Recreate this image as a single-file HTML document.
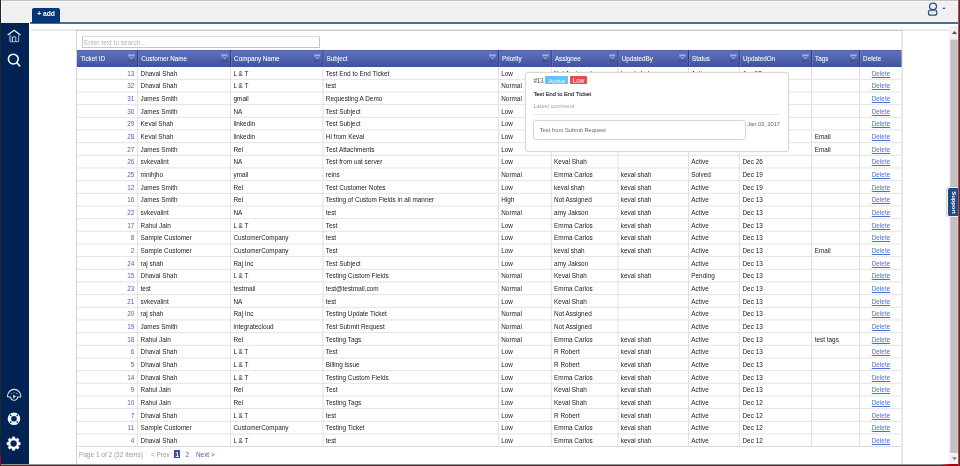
<!DOCTYPE html><html><head><meta charset="utf-8"><title>Tickets</title><style>
*{box-sizing:border-box;margin:0;padding:0}
html,body{width:960px;height:466px;overflow:hidden;background:#fff}
#w{position:absolute;left:-12px;top:-12px;width:984px;height:490px;filter:blur(0.35px);background:#fff}
#in{position:absolute;left:12px;top:12px;width:960px;height:466px}
body{position:relative;font-family:"Liberation Sans",sans-serif;font-size:6.4px;color:#222}
.abs{position:absolute}
#topbar{left:-12px;top:-12px;width:984px;height:34.6px;background:linear-gradient(#c3c3c3,#c3c3c3 13px,#f5f5f5 13px,#f5f5f5 14px,#f0f0f0 14px)}
#blueline{left:29.5px;top:22.25px;width:929.5px;height:1.4px;background:#4b6c9a}
#sidebar{left:0.8px;top:22.5px;width:28.7px;height:441.8px;background:#002354}
#leftedge{left:-12px;top:-12px;width:13px;height:490px;background:#262626}
#tab{left:32px;top:7.8px;width:28.1px;height:14.9px;background:#053775;border-radius:2px 2px 0 0;color:#fff;font-weight:bold;font-size:6.7px;line-height:11.6px;text-align:center}
#sep{left:31px;top:29.4px;width:918px;height:1.6px;background:#e8e8e8}
#grid{left:76px;top:30px;width:826px;height:434px;background:#fff}
#search{left:82.1px;top:36.3px;width:237.7px;height:11.5px;border:1px solid #c6c6c6;border-top-color:#dcdcdc;background:#fff;color:#b2b2b2;font-size:6.5px;line-height:11.7px;padding-left:0.9px;white-space:nowrap}
#header{left:76px;top:50px;width:826px;height:16.65px;background:linear-gradient(#6172ba,#5466b0 40%,#3e519c);border-top:1px solid #4d60ab}
.h{position:absolute;top:50px;height:16.6px;color:#fff;font-size:6.3px;line-height:17.1px;white-space:nowrap;-webkit-text-stroke:0.05px #fff}
.fb{position:absolute;top:54px;width:6.7px;height:7.8px;background:linear-gradient(#8a9ad0,#5568b0 50%,#34478f)}
.r{position:absolute;left:0;width:960px;height:12.665px}
.c{position:absolute;top:0;height:12.665px;line-height:14.5px;white-space:nowrap}
.c.id{text-align:right;color:#4f63b8}
.c.del{text-align:center;color:#4a6fd8;text-decoration:underline;text-decoration-thickness:0.6px}
#pager{left:77px;top:447.2px;width:824px;height:17px;background:#fff;color:#9a9a9a;line-height:15px;white-space:nowrap}
#pager span{position:absolute;top:0}
#popup{left:525.3px;top:72.3px;width:263.3px;height:79.7px;background:#fff;border:1px solid #dbd6cf;border-radius:3px;box-shadow:0 0 1.5px rgba(0,0,0,.10)}
#scroll{left:950px;top:26px;width:9px;height:438px;background:#f0f0f0}
#thumb{left:950.5px;top:39.5px;width:8px;height:413.5px;background:#c1c1c1}
#redr{left:958.75px;top:-12px;width:14px;height:490px;background:#a9040f}
#darkr{left:957.8px;top:-12px;width:1px;height:476.5px;background:#66706f}
#redb{left:-12px;top:464.8px;width:984px;height:14px;background:#a9040f}
#grayb{left:-12px;top:463.7px;width:984px;height:1.2px;background:linear-gradient(to right,#8c9494 0,#8c9494 952px,#a9040f 962px)}
#support{left:947.2px;top:186.9px;width:11.4px;height:30.2px;background:#1f4a83;border:1px solid #eef2f8;border-right:none;border-radius:2.5px 0 0 2.5px;box-shadow:-0.5px 0 1px rgba(0,0,0,.18)}
</style></head><body><div id="w"><div id="in">
<div id="topbar" class="abs"></div>
<div class="abs" style="left:1px;top:1px;width:1px;height:21.4px;background:#fbfbfb"></div>
<div id="sidebar" class="abs"></div>
<div id="blueline" class="abs"></div>
<div id="tab" class="abs">+ add</div>
<svg class="abs" style="left:922px;top:0px" width="30" height="22" viewBox="922 0 30 22"><g fill="none" stroke="#2f4f7c" stroke-width="1.3"><ellipse cx="933" cy="6.35" rx="3.5" ry="3.25"/><path d="M928.5 13.2 V12 Q928.5 10.3 930.4 10.2 H935.4 Q936.8 10.3 936.8 12 V13.2 Q936.8 15.2 934.6 15.2 H930.7 Q928.5 15.2 928.5 13.2Z"/><path d="M929 11.8 H936.3" stroke="#b9c4d4" stroke-width=".6"/></g><rect x="942.8" y="7.7" width="2.3" height="1.3" fill="#33537f"/></svg>
<svg class="abs" style="left:0px;top:22px" width="30" height="442" viewBox="0 22 30 442">
<g fill="none" stroke-linejoin="miter">
<path d="M7.7 35 L14.1 30.2 L20.5 35" stroke="#f2f4f8" stroke-width="1.15"/>
<path d="M9.9 34.4 V41.7 H18.7 V34.4" stroke="#aab6cb" stroke-width="1"/>
<path d="M10.9 35.4 V41.3" stroke="#6f82a6" stroke-width=".9"/>
<path d="M12.5 41.7 V36.9 H15.8 V41.7" stroke="#c4cddc" stroke-width="1"/>
</g>
<g fill="none" stroke="#fff" stroke-width="1.55" stroke-linecap="round">
<circle cx="13.3" cy="59.1" r="4.9"/>
<path d="M16.9 62.7 L19.8 66"/>
</g>
<g fill="none" stroke="#e4e8f0" stroke-width="1.1" stroke-linejoin="round">
<path d="M7.5 396.3 A6.65 6.9 0 0 1 20.8 396.3 Q20.8 397 20 397 H17.6 Q17.2 400.3 14.1 400.3 Q11 400.3 10.6 397 H8.3 Q7.5 397 7.5 396.3Z"/>
</g>
<g fill="#cfd6e4"><circle cx="11.3" cy="393.6" r="0.6"/><circle cx="14" cy="392.6" r="0.6"/><circle cx="16.8" cy="393.6" r="0.6"/></g>
<path d="M13.2 395.2 L15.6 396.3 L14.4 396.9 L13.9 398.3Z" fill="#f0f2f6" stroke="#f0f2f6" stroke-width=".5" stroke-linejoin="round"/>
<g fill="none">
<circle cx="13.96" cy="418.75" r="4.55" stroke="#f4f6fa" stroke-width="3.5"/>
<path d="M16.58 421.37 L17.99 422.78 M11.34 421.37 L9.93 422.78 M11.34 416.13 L9.93 414.72 M16.58 416.13 L17.99 414.72" stroke="#0a2858" stroke-width="1.15"/>
</g>
<path d="M12.03 438.54 L12.50 436.79 L14.70 436.79 L15.17 438.54 L16.07 438.91 L17.64 438.01 L19.19 439.56 L18.29 441.13 L18.66 442.03 L20.41 442.50 L20.41 444.70 L18.66 445.17 L18.29 446.07 L19.19 447.64 L17.64 449.19 L16.07 448.29 L15.17 448.66 L14.70 450.41 L12.50 450.41 L12.03 448.66 L11.13 448.29 L9.56 449.19 L8.01 447.64 L8.91 446.07 L8.54 445.17 L6.79 444.70 L6.79 442.50 L8.54 442.03 L8.91 441.13 L8.01 439.56 L9.56 438.01 L11.13 438.91Z M10.30 443.60 a3.30 3.30 0 1 0 6.60 0 a3.30 3.30 0 1 0 -6.60 0Z" fill="#fff" fill-rule="evenodd" stroke="#fff" stroke-width=".25" stroke-linejoin="round"/>
</svg>
<div id="sep" class="abs"></div>
<div id="grid" class="abs"></div>
<div id="search" class="abs">Enter text to search...</div>
<div id="header" class="abs"></div>
<div class="h" style="left:80.40px;width:56.20px">Ticket ID</div>
<div class="fb" style="left:128.15px"><svg width="7" height="8" viewBox="0 0 7 8" style="display:block"><path d="M1 1.5 H5.8 L3.95 3.6 V5 L2.85 4.4 V3.6Z" fill="#4b5ea8" stroke="#d3daf3" stroke-width=".65" stroke-linejoin="round" opacity=".8"/></svg></div>
<div class="h" style="left:141.20px;width:88.30px">Customer Name</div>
<div class="fb" style="left:221.05px"><svg width="7" height="8" viewBox="0 0 7 8" style="display:block"><path d="M1 1.5 H5.8 L3.95 3.6 V5 L2.85 4.4 V3.6Z" fill="#4b5ea8" stroke="#d3daf3" stroke-width=".65" stroke-linejoin="round" opacity=".8"/></svg></div>
<div class="h" style="left:234.10px;width:87.90px">Company Name</div>
<div class="fb" style="left:313.55px"><svg width="7" height="8" viewBox="0 0 7 8" style="display:block"><path d="M1 1.5 H5.8 L3.95 3.6 V5 L2.85 4.4 V3.6Z" fill="#4b5ea8" stroke="#d3daf3" stroke-width=".65" stroke-linejoin="round" opacity=".8"/></svg></div>
<div class="h" style="left:326.60px;width:170.84px">Subject</div>
<div class="fb" style="left:488.99px"><svg width="7" height="8" viewBox="0 0 7 8" style="display:block"><path d="M1 1.5 H5.8 L3.95 3.6 V5 L2.85 4.4 V3.6Z" fill="#4b5ea8" stroke="#d3daf3" stroke-width=".65" stroke-linejoin="round" opacity=".8"/></svg></div>
<div class="h" style="left:502.04px;width:48.26px">Priority</div>
<div class="fb" style="left:541.85px"><svg width="7" height="8" viewBox="0 0 7 8" style="display:block"><path d="M1 1.5 H5.8 L3.95 3.6 V5 L2.85 4.4 V3.6Z" fill="#4b5ea8" stroke="#d3daf3" stroke-width=".65" stroke-linejoin="round" opacity=".8"/></svg></div>
<div class="h" style="left:554.90px;width:62.16px">Assignee</div>
<div class="fb" style="left:608.61px"><svg width="7" height="8" viewBox="0 0 7 8" style="display:block"><path d="M1 1.5 H5.8 L3.95 3.6 V5 L2.85 4.4 V3.6Z" fill="#4b5ea8" stroke="#d3daf3" stroke-width=".65" stroke-linejoin="round" opacity=".8"/></svg></div>
<div class="h" style="left:621.66px;width:65.84px">UpdatedBy</div>
<div class="fb" style="left:679.05px"><svg width="7" height="8" viewBox="0 0 7 8" style="display:block"><path d="M1 1.5 H5.8 L3.95 3.6 V5 L2.85 4.4 V3.6Z" fill="#4b5ea8" stroke="#d3daf3" stroke-width=".65" stroke-linejoin="round" opacity=".8"/></svg></div>
<div class="h" style="left:692.10px;width:46.20px">Status</div>
<div class="fb" style="left:729.85px"><svg width="7" height="8" viewBox="0 0 7 8" style="display:block"><path d="M1 1.5 H5.8 L3.95 3.6 V5 L2.85 4.4 V3.6Z" fill="#4b5ea8" stroke="#d3daf3" stroke-width=".65" stroke-linejoin="round" opacity=".8"/></svg></div>
<div class="h" style="left:742.90px;width:67.60px">UpdatedOn</div>
<div class="fb" style="left:802.05px"><svg width="7" height="8" viewBox="0 0 7 8" style="display:block"><path d="M1 1.5 H5.8 L3.95 3.6 V5 L2.85 4.4 V3.6Z" fill="#4b5ea8" stroke="#d3daf3" stroke-width=".65" stroke-linejoin="round" opacity=".8"/></svg></div>
<div class="h" style="left:815.10px;width:43.40px">Tags</div>
<div class="fb" style="left:850.05px"><svg width="7" height="8" viewBox="0 0 7 8" style="display:block"><path d="M1 1.5 H5.8 L3.95 3.6 V5 L2.85 4.4 V3.6Z" fill="#4b5ea8" stroke="#d3daf3" stroke-width=".65" stroke-linejoin="round" opacity=".8"/></svg></div>
<div class="h" style="left:863.10px;width:37.90px">Delete</div>
<div class="r" style="top:66.65px"><div class="c id" style="left:77.50px;width:56.75px">13</div><div class="c" style="left:140.60px;width:88.90px">Dhaval Shah</div><div class="c" style="left:233.50px;width:88.50px">L &amp; T</div><div class="c" style="left:325.80px;width:171.64px">Test End to End Ticket</div><div class="c" style="left:501.24px;width:49.06px">Low</div><div class="c" style="left:554.10px;width:62.96px">Not Assigned</div><div class="c" style="left:620.86px;width:66.64px">keval shah</div><div class="c" style="left:691.30px;width:47.00px">Active</div><div class="c" style="left:742.50px;width:68.00px">Jan 03</div><div class="c" style="left:814.70px;width:43.80px"></div><div class="c del" style="left:860.00px;width:42.00px">Delete</div></div>
<div class="r" style="top:79.31px"><div class="c id" style="left:77.50px;width:56.75px">32</div><div class="c" style="left:140.60px;width:88.90px">Dhaval Shah</div><div class="c" style="left:233.50px;width:88.50px">L &amp; T</div><div class="c" style="left:325.80px;width:171.64px">test</div><div class="c" style="left:501.24px;width:49.06px">Normal</div><div class="c" style="left:814.70px;width:43.80px"></div><div class="c del" style="left:860.00px;width:42.00px">Delete</div></div>
<div class="r" style="top:91.98px"><div class="c id" style="left:77.50px;width:56.75px">31</div><div class="c" style="left:140.60px;width:88.90px">James Smith</div><div class="c" style="left:233.50px;width:88.50px">gmail</div><div class="c" style="left:325.80px;width:171.64px">Requesting A Demo</div><div class="c" style="left:501.24px;width:49.06px">Normal</div><div class="c" style="left:814.70px;width:43.80px"></div><div class="c del" style="left:860.00px;width:42.00px">Delete</div></div>
<div class="r" style="top:104.65px"><div class="c id" style="left:77.50px;width:56.75px">30</div><div class="c" style="left:140.60px;width:88.90px">James Smith</div><div class="c" style="left:233.50px;width:88.50px">NA</div><div class="c" style="left:325.80px;width:171.64px">Test Subject</div><div class="c" style="left:501.24px;width:49.06px">Low</div><div class="c" style="left:814.70px;width:43.80px"></div><div class="c del" style="left:860.00px;width:42.00px">Delete</div></div>
<div class="r" style="top:117.31px"><div class="c id" style="left:77.50px;width:56.75px">29</div><div class="c" style="left:140.60px;width:88.90px">Keval Shah</div><div class="c" style="left:233.50px;width:88.50px">linkedin</div><div class="c" style="left:325.80px;width:171.64px">Test Subject</div><div class="c" style="left:501.24px;width:49.06px">Low</div><div class="c" style="left:814.70px;width:43.80px"></div><div class="c del" style="left:860.00px;width:42.00px">Delete</div></div>
<div class="r" style="top:129.97px"><div class="c id" style="left:77.50px;width:56.75px">28</div><div class="c" style="left:140.60px;width:88.90px">Keval Shah</div><div class="c" style="left:233.50px;width:88.50px">linkedin</div><div class="c" style="left:325.80px;width:171.64px">Hi from Keval</div><div class="c" style="left:501.24px;width:49.06px">Low</div><div class="c" style="left:814.70px;width:43.80px">Email</div><div class="c del" style="left:860.00px;width:42.00px">Delete</div></div>
<div class="r" style="top:142.64px"><div class="c id" style="left:77.50px;width:56.75px">27</div><div class="c" style="left:140.60px;width:88.90px">James Smith</div><div class="c" style="left:233.50px;width:88.50px">Rel</div><div class="c" style="left:325.80px;width:171.64px">Test Attachments</div><div class="c" style="left:501.24px;width:49.06px">Low</div><div class="c" style="left:814.70px;width:43.80px">Email</div><div class="c del" style="left:860.00px;width:42.00px">Delete</div></div>
<div class="r" style="top:155.31px"><div class="c id" style="left:77.50px;width:56.75px">26</div><div class="c" style="left:140.60px;width:88.90px">svkevalint</div><div class="c" style="left:233.50px;width:88.50px">NA</div><div class="c" style="left:325.80px;width:171.64px">Test from uat server</div><div class="c" style="left:501.24px;width:49.06px">Low</div><div class="c" style="left:554.10px;width:62.96px">Keval Shah</div><div class="c" style="left:620.86px;width:66.64px"></div><div class="c" style="left:691.30px;width:47.00px">Active</div><div class="c" style="left:742.50px;width:68.00px">Dec 26</div><div class="c" style="left:814.70px;width:43.80px"></div><div class="c del" style="left:860.00px;width:42.00px">Delete</div></div>
<div class="r" style="top:167.97px"><div class="c id" style="left:77.50px;width:56.75px">25</div><div class="c" style="left:140.60px;width:88.90px">mnihjho</div><div class="c" style="left:233.50px;width:88.50px">ymail</div><div class="c" style="left:325.80px;width:171.64px">reins</div><div class="c" style="left:501.24px;width:49.06px">Normal</div><div class="c" style="left:554.10px;width:62.96px">Emma Carlos</div><div class="c" style="left:620.86px;width:66.64px">keval shah</div><div class="c" style="left:691.30px;width:47.00px">Solved</div><div class="c" style="left:742.50px;width:68.00px">Dec 19</div><div class="c" style="left:814.70px;width:43.80px"></div><div class="c del" style="left:860.00px;width:42.00px">Delete</div></div>
<div class="r" style="top:180.63px"><div class="c id" style="left:77.50px;width:56.75px">12</div><div class="c" style="left:140.60px;width:88.90px">James Smith</div><div class="c" style="left:233.50px;width:88.50px">Rel</div><div class="c" style="left:325.80px;width:171.64px">Test Customer Notes</div><div class="c" style="left:501.24px;width:49.06px">Low</div><div class="c" style="left:554.10px;width:62.96px">keval shah</div><div class="c" style="left:620.86px;width:66.64px">keval shah</div><div class="c" style="left:691.30px;width:47.00px">Active</div><div class="c" style="left:742.50px;width:68.00px">Dec 19</div><div class="c" style="left:814.70px;width:43.80px"></div><div class="c del" style="left:860.00px;width:42.00px">Delete</div></div>
<div class="r" style="top:193.30px"><div class="c id" style="left:77.50px;width:56.75px">16</div><div class="c" style="left:140.60px;width:88.90px">James Smith</div><div class="c" style="left:233.50px;width:88.50px">Rel</div><div class="c" style="left:325.80px;width:171.64px">Testing of Custom Fields in all manner</div><div class="c" style="left:501.24px;width:49.06px">High</div><div class="c" style="left:554.10px;width:62.96px">Not Assigned</div><div class="c" style="left:620.86px;width:66.64px">keval shah</div><div class="c" style="left:691.30px;width:47.00px">Active</div><div class="c" style="left:742.50px;width:68.00px">Dec 13</div><div class="c" style="left:814.70px;width:43.80px"></div><div class="c del" style="left:860.00px;width:42.00px">Delete</div></div>
<div class="r" style="top:205.97px"><div class="c id" style="left:77.50px;width:56.75px">22</div><div class="c" style="left:140.60px;width:88.90px">svkevalint</div><div class="c" style="left:233.50px;width:88.50px">NA</div><div class="c" style="left:325.80px;width:171.64px">test</div><div class="c" style="left:501.24px;width:49.06px">Normal</div><div class="c" style="left:554.10px;width:62.96px">amy Jakson</div><div class="c" style="left:620.86px;width:66.64px">keval shah</div><div class="c" style="left:691.30px;width:47.00px">Active</div><div class="c" style="left:742.50px;width:68.00px">Dec 13</div><div class="c" style="left:814.70px;width:43.80px"></div><div class="c del" style="left:860.00px;width:42.00px">Delete</div></div>
<div class="r" style="top:218.63px"><div class="c id" style="left:77.50px;width:56.75px">17</div><div class="c" style="left:140.60px;width:88.90px">Rahul Jain</div><div class="c" style="left:233.50px;width:88.50px">L &amp; T</div><div class="c" style="left:325.80px;width:171.64px">Test</div><div class="c" style="left:501.24px;width:49.06px">Low</div><div class="c" style="left:554.10px;width:62.96px">Emma Carlos</div><div class="c" style="left:620.86px;width:66.64px">keval shah</div><div class="c" style="left:691.30px;width:47.00px">Active</div><div class="c" style="left:742.50px;width:68.00px">Dec 13</div><div class="c" style="left:814.70px;width:43.80px"></div><div class="c del" style="left:860.00px;width:42.00px">Delete</div></div>
<div class="r" style="top:231.29px"><div class="c id" style="left:77.50px;width:56.75px">8</div><div class="c" style="left:140.60px;width:88.90px">Sample Customer</div><div class="c" style="left:233.50px;width:88.50px">CustomerCompany</div><div class="c" style="left:325.80px;width:171.64px">test</div><div class="c" style="left:501.24px;width:49.06px">Low</div><div class="c" style="left:554.10px;width:62.96px">Emma Carlos</div><div class="c" style="left:620.86px;width:66.64px">keval shah</div><div class="c" style="left:691.30px;width:47.00px">Active</div><div class="c" style="left:742.50px;width:68.00px">Dec 13</div><div class="c" style="left:814.70px;width:43.80px"></div><div class="c del" style="left:860.00px;width:42.00px">Delete</div></div>
<div class="r" style="top:243.96px"><div class="c id" style="left:77.50px;width:56.75px">2</div><div class="c" style="left:140.60px;width:88.90px">Sample Customer</div><div class="c" style="left:233.50px;width:88.50px">CustomerCompany</div><div class="c" style="left:325.80px;width:171.64px">Test</div><div class="c" style="left:501.24px;width:49.06px">Low</div><div class="c" style="left:554.10px;width:62.96px">keval shah</div><div class="c" style="left:620.86px;width:66.64px">keval shah</div><div class="c" style="left:691.30px;width:47.00px">Active</div><div class="c" style="left:742.50px;width:68.00px">Dec 13</div><div class="c" style="left:814.70px;width:43.80px">Email</div><div class="c del" style="left:860.00px;width:42.00px">Delete</div></div>
<div class="r" style="top:256.62px"><div class="c id" style="left:77.50px;width:56.75px">24</div><div class="c" style="left:140.60px;width:88.90px">raj shah</div><div class="c" style="left:233.50px;width:88.50px">Raj Inc</div><div class="c" style="left:325.80px;width:171.64px">Test Subject</div><div class="c" style="left:501.24px;width:49.06px">Low</div><div class="c" style="left:554.10px;width:62.96px">amy Jakson</div><div class="c" style="left:620.86px;width:66.64px"></div><div class="c" style="left:691.30px;width:47.00px">Active</div><div class="c" style="left:742.50px;width:68.00px">Dec 13</div><div class="c" style="left:814.70px;width:43.80px"></div><div class="c del" style="left:860.00px;width:42.00px">Delete</div></div>
<div class="r" style="top:269.29px"><div class="c id" style="left:77.50px;width:56.75px">15</div><div class="c" style="left:140.60px;width:88.90px">Dhaval Shah</div><div class="c" style="left:233.50px;width:88.50px">L &amp; T</div><div class="c" style="left:325.80px;width:171.64px">Testing Custom Fields</div><div class="c" style="left:501.24px;width:49.06px">Normal</div><div class="c" style="left:554.10px;width:62.96px">Keval Shah</div><div class="c" style="left:620.86px;width:66.64px">keval shah</div><div class="c" style="left:691.30px;width:47.00px">Pending</div><div class="c" style="left:742.50px;width:68.00px">Dec 13</div><div class="c" style="left:814.70px;width:43.80px"></div><div class="c del" style="left:860.00px;width:42.00px">Delete</div></div>
<div class="r" style="top:281.95px"><div class="c id" style="left:77.50px;width:56.75px">23</div><div class="c" style="left:140.60px;width:88.90px">test</div><div class="c" style="left:233.50px;width:88.50px">testmail</div><div class="c" style="left:325.80px;width:171.64px">test@testmail.com</div><div class="c" style="left:501.24px;width:49.06px">Normal</div><div class="c" style="left:554.10px;width:62.96px">Emma Carlos</div><div class="c" style="left:620.86px;width:66.64px"></div><div class="c" style="left:691.30px;width:47.00px">Active</div><div class="c" style="left:742.50px;width:68.00px">Dec 13</div><div class="c" style="left:814.70px;width:43.80px"></div><div class="c del" style="left:860.00px;width:42.00px">Delete</div></div>
<div class="r" style="top:294.62px"><div class="c id" style="left:77.50px;width:56.75px">21</div><div class="c" style="left:140.60px;width:88.90px">svkevalint</div><div class="c" style="left:233.50px;width:88.50px">NA</div><div class="c" style="left:325.80px;width:171.64px">test</div><div class="c" style="left:501.24px;width:49.06px">Low</div><div class="c" style="left:554.10px;width:62.96px">Keval Shah</div><div class="c" style="left:620.86px;width:66.64px"></div><div class="c" style="left:691.30px;width:47.00px">Active</div><div class="c" style="left:742.50px;width:68.00px">Dec 13</div><div class="c" style="left:814.70px;width:43.80px"></div><div class="c del" style="left:860.00px;width:42.00px">Delete</div></div>
<div class="r" style="top:307.28px"><div class="c id" style="left:77.50px;width:56.75px">20</div><div class="c" style="left:140.60px;width:88.90px">raj shah</div><div class="c" style="left:233.50px;width:88.50px">Raj Inc</div><div class="c" style="left:325.80px;width:171.64px">Testing Update Ticket</div><div class="c" style="left:501.24px;width:49.06px">Normal</div><div class="c" style="left:554.10px;width:62.96px">Not Assigned</div><div class="c" style="left:620.86px;width:66.64px"></div><div class="c" style="left:691.30px;width:47.00px">Active</div><div class="c" style="left:742.50px;width:68.00px">Dec 13</div><div class="c" style="left:814.70px;width:43.80px"></div><div class="c del" style="left:860.00px;width:42.00px">Delete</div></div>
<div class="r" style="top:319.95px"><div class="c id" style="left:77.50px;width:56.75px">19</div><div class="c" style="left:140.60px;width:88.90px">James Smith</div><div class="c" style="left:233.50px;width:88.50px">integratecloud</div><div class="c" style="left:325.80px;width:171.64px">Test Submit Request</div><div class="c" style="left:501.24px;width:49.06px">Normal</div><div class="c" style="left:554.10px;width:62.96px">Not Assigned</div><div class="c" style="left:620.86px;width:66.64px"></div><div class="c" style="left:691.30px;width:47.00px">Active</div><div class="c" style="left:742.50px;width:68.00px">Dec 13</div><div class="c" style="left:814.70px;width:43.80px"></div><div class="c del" style="left:860.00px;width:42.00px">Delete</div></div>
<div class="r" style="top:332.62px"><div class="c id" style="left:77.50px;width:56.75px">18</div><div class="c" style="left:140.60px;width:88.90px">Rahul Jain</div><div class="c" style="left:233.50px;width:88.50px">Rel</div><div class="c" style="left:325.80px;width:171.64px">Testing Tags</div><div class="c" style="left:501.24px;width:49.06px">Normal</div><div class="c" style="left:554.10px;width:62.96px">Emma Carlos</div><div class="c" style="left:620.86px;width:66.64px">keval shah</div><div class="c" style="left:691.30px;width:47.00px">Active</div><div class="c" style="left:742.50px;width:68.00px">Dec 13</div><div class="c" style="left:814.70px;width:43.80px">test tags</div><div class="c del" style="left:860.00px;width:42.00px">Delete</div></div>
<div class="r" style="top:345.28px"><div class="c id" style="left:77.50px;width:56.75px">6</div><div class="c" style="left:140.60px;width:88.90px">Dhaval Shah</div><div class="c" style="left:233.50px;width:88.50px">L &amp; T</div><div class="c" style="left:325.80px;width:171.64px">Test</div><div class="c" style="left:501.24px;width:49.06px">Low</div><div class="c" style="left:554.10px;width:62.96px">R Robert</div><div class="c" style="left:620.86px;width:66.64px">keval shah</div><div class="c" style="left:691.30px;width:47.00px">Active</div><div class="c" style="left:742.50px;width:68.00px">Dec 13</div><div class="c" style="left:814.70px;width:43.80px"></div><div class="c del" style="left:860.00px;width:42.00px">Delete</div></div>
<div class="r" style="top:357.94px"><div class="c id" style="left:77.50px;width:56.75px">5</div><div class="c" style="left:140.60px;width:88.90px">Dhaval Shah</div><div class="c" style="left:233.50px;width:88.50px">L &amp; T</div><div class="c" style="left:325.80px;width:171.64px">Billing issue</div><div class="c" style="left:501.24px;width:49.06px">Low</div><div class="c" style="left:554.10px;width:62.96px">R Robert</div><div class="c" style="left:620.86px;width:66.64px">keval shah</div><div class="c" style="left:691.30px;width:47.00px">Active</div><div class="c" style="left:742.50px;width:68.00px">Dec 13</div><div class="c" style="left:814.70px;width:43.80px"></div><div class="c del" style="left:860.00px;width:42.00px">Delete</div></div>
<div class="r" style="top:370.61px"><div class="c id" style="left:77.50px;width:56.75px">14</div><div class="c" style="left:140.60px;width:88.90px">Dhaval Shah</div><div class="c" style="left:233.50px;width:88.50px">L &amp; T</div><div class="c" style="left:325.80px;width:171.64px">Testing Custom Fields</div><div class="c" style="left:501.24px;width:49.06px">Low</div><div class="c" style="left:554.10px;width:62.96px">Emma Carlos</div><div class="c" style="left:620.86px;width:66.64px">keval shah</div><div class="c" style="left:691.30px;width:47.00px">Active</div><div class="c" style="left:742.50px;width:68.00px">Dec 13</div><div class="c" style="left:814.70px;width:43.80px"></div><div class="c del" style="left:860.00px;width:42.00px">Delete</div></div>
<div class="r" style="top:383.27px"><div class="c id" style="left:77.50px;width:56.75px">9</div><div class="c" style="left:140.60px;width:88.90px">Rahul Jain</div><div class="c" style="left:233.50px;width:88.50px">Rel</div><div class="c" style="left:325.80px;width:171.64px">Test</div><div class="c" style="left:501.24px;width:49.06px">Low</div><div class="c" style="left:554.10px;width:62.96px">Keval Shah</div><div class="c" style="left:620.86px;width:66.64px">keval shah</div><div class="c" style="left:691.30px;width:47.00px">Active</div><div class="c" style="left:742.50px;width:68.00px">Dec 13</div><div class="c" style="left:814.70px;width:43.80px"></div><div class="c del" style="left:860.00px;width:42.00px">Delete</div></div>
<div class="r" style="top:395.94px"><div class="c id" style="left:77.50px;width:56.75px">10</div><div class="c" style="left:140.60px;width:88.90px">Rahul Jain</div><div class="c" style="left:233.50px;width:88.50px">Rel</div><div class="c" style="left:325.80px;width:171.64px">Testing Tags</div><div class="c" style="left:501.24px;width:49.06px">Low</div><div class="c" style="left:554.10px;width:62.96px">Keval Shah</div><div class="c" style="left:620.86px;width:66.64px">keval shah</div><div class="c" style="left:691.30px;width:47.00px">Active</div><div class="c" style="left:742.50px;width:68.00px">Dec 12</div><div class="c" style="left:814.70px;width:43.80px"></div><div class="c del" style="left:860.00px;width:42.00px">Delete</div></div>
<div class="r" style="top:408.61px"><div class="c id" style="left:77.50px;width:56.75px">7</div><div class="c" style="left:140.60px;width:88.90px">Dhaval Shah</div><div class="c" style="left:233.50px;width:88.50px">L &amp; T</div><div class="c" style="left:325.80px;width:171.64px">test</div><div class="c" style="left:501.24px;width:49.06px">Low</div><div class="c" style="left:554.10px;width:62.96px">R Robert</div><div class="c" style="left:620.86px;width:66.64px">keval shah</div><div class="c" style="left:691.30px;width:47.00px">Active</div><div class="c" style="left:742.50px;width:68.00px">Dec 12</div><div class="c" style="left:814.70px;width:43.80px"></div><div class="c del" style="left:860.00px;width:42.00px">Delete</div></div>
<div class="r" style="top:421.27px"><div class="c id" style="left:77.50px;width:56.75px">11</div><div class="c" style="left:140.60px;width:88.90px">Sample Customer</div><div class="c" style="left:233.50px;width:88.50px">CustomerCompany</div><div class="c" style="left:325.80px;width:171.64px">Testing Ticket</div><div class="c" style="left:501.24px;width:49.06px">Low</div><div class="c" style="left:554.10px;width:62.96px">Emma Carlos</div><div class="c" style="left:620.86px;width:66.64px">keval shah</div><div class="c" style="left:691.30px;width:47.00px">Active</div><div class="c" style="left:742.50px;width:68.00px">Dec 12</div><div class="c" style="left:814.70px;width:43.80px"></div><div class="c del" style="left:860.00px;width:42.00px">Delete</div></div>
<div class="r" style="top:433.93px"><div class="c id" style="left:77.50px;width:56.75px">4</div><div class="c" style="left:140.60px;width:88.90px">Dhaval Shah</div><div class="c" style="left:233.50px;width:88.50px">L &amp; T</div><div class="c" style="left:325.80px;width:171.64px">test</div><div class="c" style="left:501.24px;width:49.06px">Low</div><div class="c" style="left:554.10px;width:62.96px">Emma Carlos</div><div class="c" style="left:620.86px;width:66.64px">keval shah</div><div class="c" style="left:691.30px;width:47.00px">Active</div><div class="c" style="left:742.50px;width:68.00px">Dec 12</div><div class="c" style="left:814.70px;width:43.80px"></div><div class="c del" style="left:860.00px;width:42.00px">Delete</div></div>
<svg class="abs" style="left:0;top:0" width="960" height="466" viewBox="0 0 960 466"><rect x="77.00" y="78.81" width="824.50" height="1" fill="#e3e3e3"/><rect x="77.00" y="91.48" width="824.50" height="1" fill="#e3e3e3"/><rect x="77.00" y="104.15" width="824.50" height="1" fill="#e3e3e3"/><rect x="77.00" y="116.81" width="824.50" height="1" fill="#e3e3e3"/><rect x="77.00" y="129.47" width="824.50" height="1" fill="#e3e3e3"/><rect x="77.00" y="142.14" width="824.50" height="1" fill="#e3e3e3"/><rect x="77.00" y="154.81" width="824.50" height="1" fill="#e3e3e3"/><rect x="77.00" y="167.47" width="824.50" height="1" fill="#e3e3e3"/><rect x="77.00" y="180.13" width="824.50" height="1" fill="#e3e3e3"/><rect x="77.00" y="192.80" width="824.50" height="1" fill="#e3e3e3"/><rect x="77.00" y="205.47" width="824.50" height="1" fill="#e3e3e3"/><rect x="77.00" y="218.13" width="824.50" height="1" fill="#e3e3e3"/><rect x="77.00" y="230.79" width="824.50" height="1" fill="#e3e3e3"/><rect x="77.00" y="243.46" width="824.50" height="1" fill="#e3e3e3"/><rect x="77.00" y="256.12" width="824.50" height="1" fill="#e3e3e3"/><rect x="77.00" y="268.79" width="824.50" height="1" fill="#e3e3e3"/><rect x="77.00" y="281.45" width="824.50" height="1" fill="#e3e3e3"/><rect x="77.00" y="294.12" width="824.50" height="1" fill="#e3e3e3"/><rect x="77.00" y="306.78" width="824.50" height="1" fill="#e3e3e3"/><rect x="77.00" y="319.45" width="824.50" height="1" fill="#e3e3e3"/><rect x="77.00" y="332.12" width="824.50" height="1" fill="#e3e3e3"/><rect x="77.00" y="344.78" width="824.50" height="1" fill="#e3e3e3"/><rect x="77.00" y="357.44" width="824.50" height="1" fill="#e3e3e3"/><rect x="77.00" y="370.11" width="824.50" height="1" fill="#e3e3e3"/><rect x="77.00" y="382.77" width="824.50" height="1" fill="#e3e3e3"/><rect x="77.00" y="395.44" width="824.50" height="1" fill="#e3e3e3"/><rect x="77.00" y="408.11" width="824.50" height="1" fill="#e3e3e3"/><rect x="77.00" y="420.77" width="824.50" height="1" fill="#e3e3e3"/><rect x="77.00" y="433.43" width="824.50" height="1" fill="#e3e3e3"/><rect x="77.00" y="446.10" width="824.50" height="1" fill="#d6d6d6"/><rect x="76.00" y="30" width="1" height="434" fill="#d2d2d2"/><rect x="137.10" y="66.65" width="1" height="379.95" fill="#e1e1e1"/><rect x="137.10" y="50" width="1" height="16.65" fill="#2e3f86"/><rect x="138.10" y="51" width="1" height="15.65" fill="#7686c6" opacity=".55"/><rect x="230.00" y="66.65" width="1" height="379.95" fill="#e1e1e1"/><rect x="230.00" y="50" width="1" height="16.65" fill="#2e3f86"/><rect x="231.00" y="51" width="1" height="15.65" fill="#7686c6" opacity=".55"/><rect x="322.50" y="66.65" width="1" height="379.95" fill="#e1e1e1"/><rect x="322.50" y="50" width="1" height="16.65" fill="#2e3f86"/><rect x="323.50" y="51" width="1" height="15.65" fill="#7686c6" opacity=".55"/><rect x="497.94" y="66.65" width="1" height="379.95" fill="#e1e1e1"/><rect x="497.94" y="50" width="1" height="16.65" fill="#2e3f86"/><rect x="498.94" y="51" width="1" height="15.65" fill="#7686c6" opacity=".55"/><rect x="550.80" y="66.65" width="1" height="379.95" fill="#e1e1e1"/><rect x="550.80" y="50" width="1" height="16.65" fill="#2e3f86"/><rect x="551.80" y="51" width="1" height="15.65" fill="#7686c6" opacity=".55"/><rect x="617.56" y="66.65" width="1" height="379.95" fill="#e1e1e1"/><rect x="617.56" y="50" width="1" height="16.65" fill="#2e3f86"/><rect x="618.56" y="51" width="1" height="15.65" fill="#7686c6" opacity=".55"/><rect x="688.00" y="66.65" width="1" height="379.95" fill="#e1e1e1"/><rect x="688.00" y="50" width="1" height="16.65" fill="#2e3f86"/><rect x="689.00" y="51" width="1" height="15.65" fill="#7686c6" opacity=".55"/><rect x="738.80" y="66.65" width="1" height="379.95" fill="#e1e1e1"/><rect x="738.80" y="50" width="1" height="16.65" fill="#2e3f86"/><rect x="739.80" y="51" width="1" height="15.65" fill="#7686c6" opacity=".55"/><rect x="811.00" y="66.65" width="1" height="379.95" fill="#e1e1e1"/><rect x="811.00" y="50" width="1" height="16.65" fill="#2e3f86"/><rect x="812.00" y="51" width="1" height="15.65" fill="#7686c6" opacity=".55"/><rect x="859.00" y="66.65" width="1" height="379.95" fill="#e1e1e1"/><rect x="859.00" y="50" width="1" height="16.65" fill="#2e3f86"/><rect x="860.00" y="51" width="1" height="15.65" fill="#7686c6" opacity=".55"/><rect x="901.50" y="30" width="1" height="434" fill="#d2d2d2"/><rect x="76" y="30" width="826.5" height="1" fill="#cccccc"/></svg>
<div id="pager" class="abs"><span style="left:1.9px;font-size:6.5px">Page 1 of 2 (32 items)</span><span style="left:74px">&lt; Prev</span><span style="left:97px;top:3px;width:6.4px;height:8.2px;line-height:9.6px;background:#3d50a0;color:#fff;text-align:center;font-weight:bold">1</span><span style="left:108.5px;color:#4f63b8">2</span><span style="left:119px;color:#4f63b8">Next &gt;</span></div>
<div id="popup" class="abs"></div>
<span class="abs" style="left:533.40px;top:75.50px;font-size:6.50px;line-height:10px;height:10px;color:#5a5a5a;white-space:nowrap;letter-spacing:-0.35px">#13</span>
<div class="abs" style="left:545.2px;top:76px;width:22.9px;height:8.3px;background:#5fc6f9;border-radius:1px"></div>
<span class="abs" style="left:548.40px;top:76.00px;font-size:6.25px;line-height:10px;height:10px;color:#f2fbff;white-space:nowrap;">Active</span>
<div class="abs" style="left:570px;top:76px;width:17.2px;height:8.3px;background:#e84a4f;border-radius:1px"></div>
<span class="abs" style="left:572.70px;top:76.00px;font-size:6.30px;line-height:10px;height:10px;color:#fff;white-space:nowrap;">Low</span>
<span class="abs" style="left:533.40px;top:89.10px;font-size:5.80px;line-height:10px;height:10px;color:#333;white-space:nowrap;-webkit-text-stroke:0.16px #333">Test End to End Ticket</span>
<span class="abs" style="left:533.40px;top:101.20px;font-size:5.76px;line-height:10px;height:10px;color:#a2a2a2;white-space:nowrap;">Latest comment</span>
<div class="abs" style="left:533.3px;top:114.2px;width:246.7px;height:1px;background:#e9e9e9"></div>
<div class="abs" style="left:533.2px;top:120.2px;width:213px;height:19.6px;border:1px solid #d9d4cd;border-radius:2.5px"></div>
<span class="abs" style="left:539.70px;top:125.20px;font-size:5.75px;line-height:10px;height:10px;color:#666;white-space:nowrap;">Test from Submit Request</span>
<span class="abs" style="left:747.20px;top:118.90px;font-size:5.68px;line-height:10px;height:10px;color:#666;white-space:nowrap;">Jan 03, 2017</span>
<svg class="abs" style="left:940px;top:20px" width="20" height="446" viewBox="940 20 20 446"><rect x="949.3" y="26" width="8.6" height="438" fill="#f1f1f1"/><rect x="950.25" y="39.6" width="7.6" height="413.3" fill="#c1c1c1"/><path d="M951.9 33.9 L954.5 30.9 L957.1 33.9Z" fill="#505050"/><path d="M951.9 457.2 L954.5 460.2 L957.1 457.2Z" fill="#858585"/></svg>
<div id="support" class="abs"><span style="position:absolute;left:0;top:0;width:28.2px;height:10px;transform-origin:0 0;transform:translate(10.6px,0.3px) rotate(90deg);color:#fff;font-weight:bold;font-size:6px;line-height:10px;text-align:center;letter-spacing:-0.1px">Support</span></div>
<div id="leftedge" class="abs"></div>
<div id="grayb" class="abs"></div><div id="redb" class="abs"></div><div id="darkr" class="abs"></div><div id="redr" class="abs"></div>
<div class="abs" style="left:-12px;top:455px;width:13px;height:23px;background:#a9040f"></div>
</div></div></body></html>
